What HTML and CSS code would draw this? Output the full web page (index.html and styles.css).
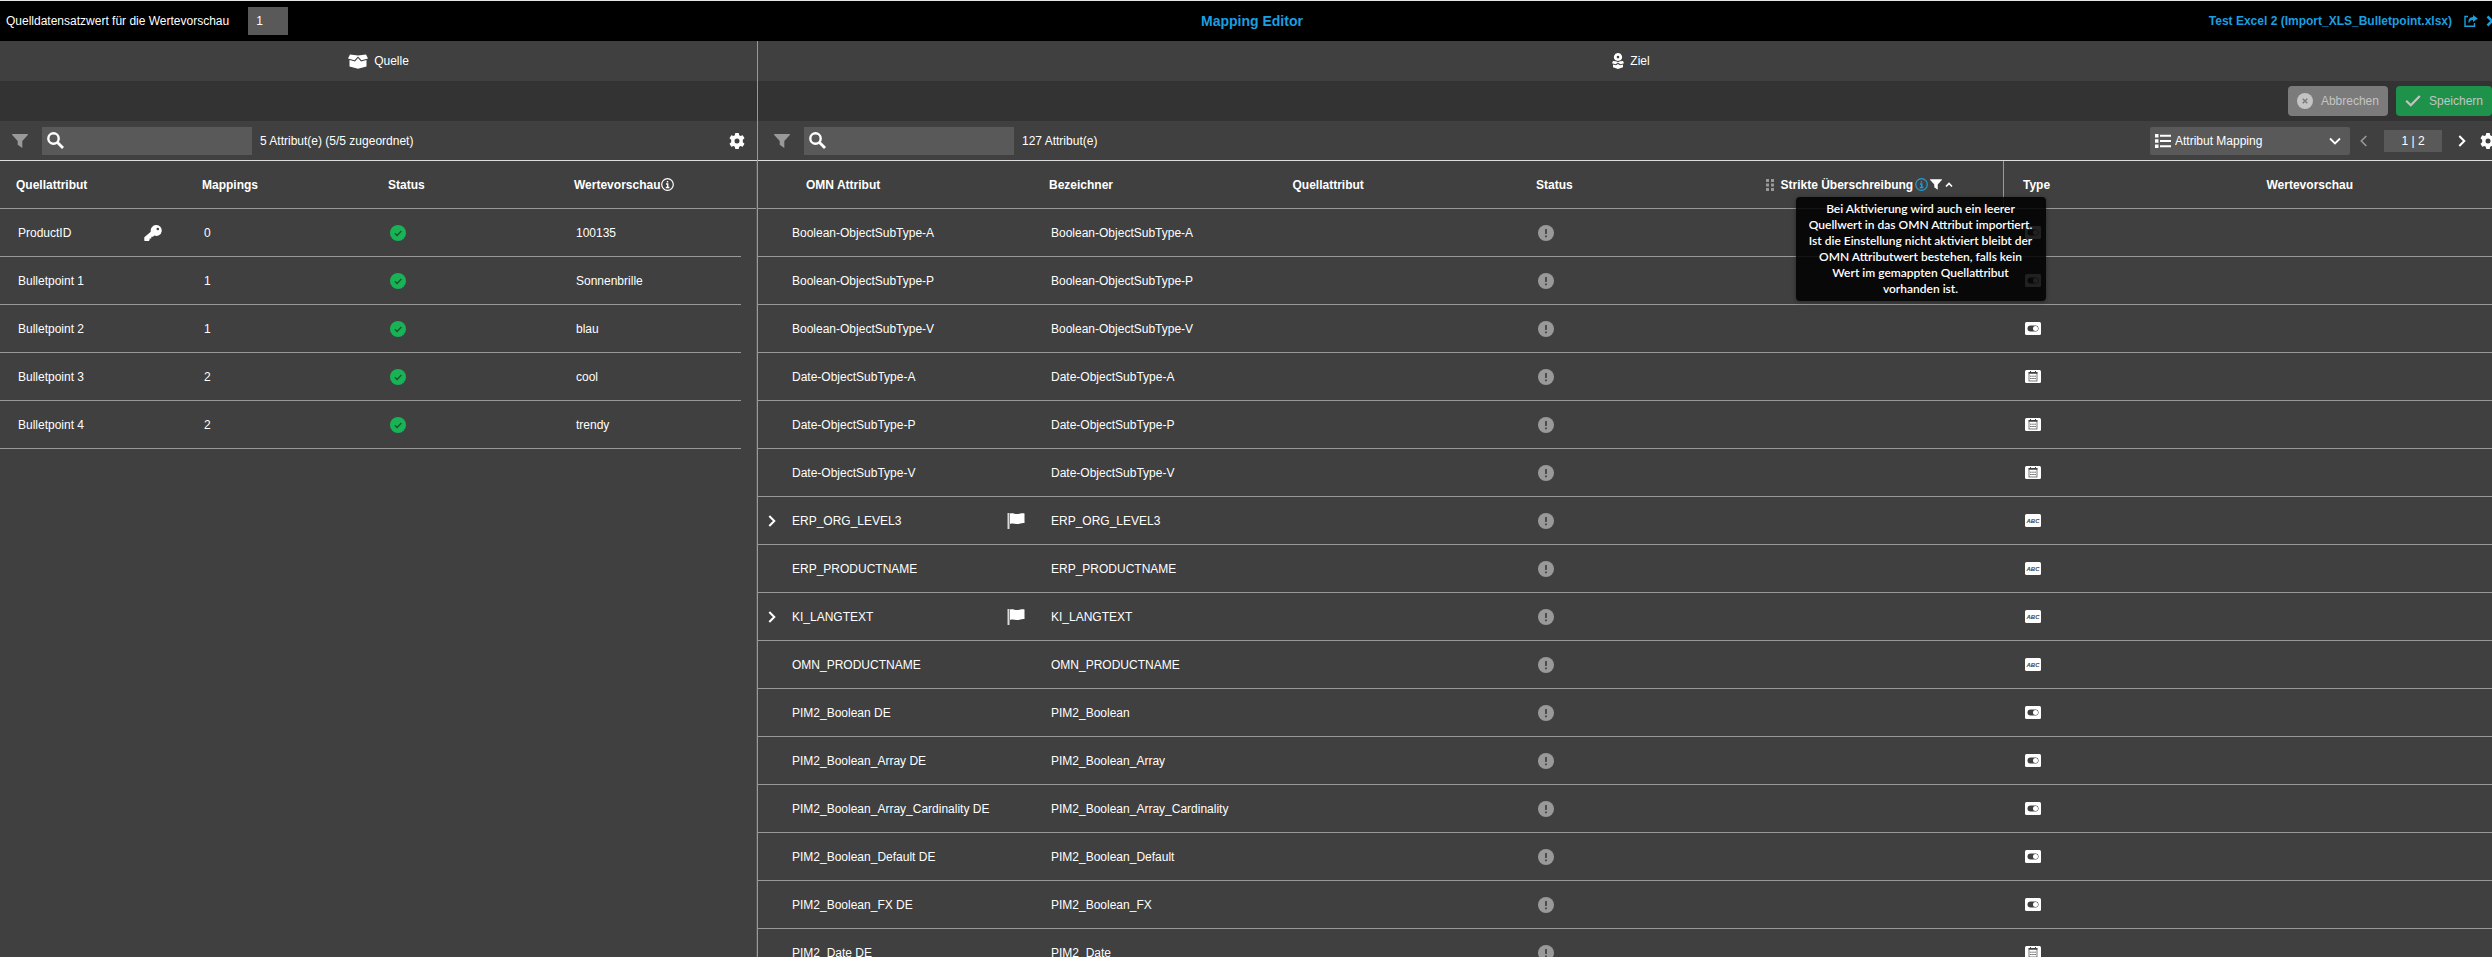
FILE: index.html
```html
<!DOCTYPE html>
<html lang="de">
<head>
    <meta charset="UTF-8">
    <meta name="viewport" content="width=device-width, initial-scale=1.0">
    <title>Mapping Editor</title>
    <link rel="stylesheet" href="styles.css">
</head>
<body>

<!-- Icon set -->
<svg class="icon-set" width="0" height="0" aria-hidden="true">
    <symbol id="i-filter" viewBox="0 0 16 14"><path d="M0.6 0h14.8c.6 0 .8.7.4 1.100L10.300 7v7L5.700 10.700V7L.2 1.100C-.2.7 0 0 .6 0z"/></symbol>
    <symbol id="i-search" viewBox="0 0 17 17"><circle cx="6.500" cy="6.500" r="5.200" fill="none" stroke="currentColor" stroke-width="2.400"/><path d="M10.500 10.500L16 16" stroke="currentColor" stroke-width="2.800"/></symbol>
    <symbol id="i-gear" viewBox="0 0 16 16"><path fill-rule="evenodd" d="M6.300 0h3.400l.5 2.300 1.300.7 2.200-.8L15.500 5.200 13.800 6.800v2.400l1.700 1.600-1.800 3-2.200-.8-1.300.7-.5 2.300H6.300l-.5-2.300-1.300-.7-2.200.8-1.800-3 1.700-1.600V6.800L.5 5.200l1.800-3 2.200.8 1.300-.7zM8 5.500a2.500 2.500 0 1 0 0 5 2.500 2.500 0 0 0 0-5z"/></symbol>
    <symbol id="i-box" viewBox="0 0 20 15"><path d="M2 .5l8 1 8-1 2 4-6.500 1.700L10 2.500 6.500 6.200 0 4.500z"/><path d="M1.500 6l5.500 1.500L10 4l3 3.500L18.500 6v6.500L10 14.800 1.500 12.500z"/></symbol>
    <symbol id="i-target" viewBox="0 0 12 16"><path fill-rule="evenodd" d="M6 0a4 4 0 0 1 2.500 7.200L6 8 3.500 7.200A4 4 0 0 1 6 0zm0 2.800a1.300 1.300 0 1 0 0 2.600 1.300 1.300 0 0 0 0-2.600z"/><path d="M1 8l3 .3 2 1 2-1L11 8l1 2.300-3.500 1L6 9.800l-2.500 1.500L0 10.300z"/><path d="M1 11.500l3 .8 2-1.300 2 1.300 3-.8v2.700L6 16l-5-1.800z"/></symbol>
    <symbol id="i-key" viewBox="0 0 18 16"><path fill-rule="evenodd" d="M12 0a5.500 5.500 0 1 1-1.800 10.600L9 11.700H7.300v1.700H5.600V15l-.8 1H.8L.3 15.500V12.300l6.500-5.600A5.500 5.500 0 0 1 12 0zm1.800 2.700a1.300 1.300 0 1 0 0 2.600 1.300 1.300 0 0 0 0-2.600z"/></symbol>
    <symbol id="i-ok" viewBox="0 0 16 16"><circle cx="8" cy="8" r="8" fill="#16b455"/><path d="M4.800 8.200l2.300 2.300 4.200-4.500" fill="none" stroke="#234a33" stroke-width="1.300"/></symbol>
    <symbol id="i-alert" viewBox="0 0 16 16"><circle cx="8" cy="8" r="8" fill="#999"/><path d="M8 4v5M8 10.500v1.800" stroke="#404040" stroke-width="1.700"/></symbol>
    <symbol id="i-info" viewBox="0 0 13 13"><circle cx="6.500" cy="6.500" r="5.800" fill="none" stroke="currentColor" stroke-width="1.200"/><path d="M6.500 3v1.500M5 6h1.700v3.500M4.800 9.500h3.600" fill="none" stroke="currentColor" stroke-width="1.400"/></symbol>
    <symbol id="i-flag" viewBox="0 0 18 16"><path d="M.5 0h2v16h-2z" opacity=".8"/><path d="M3 .6c3-1 5 .9 8 .4 2.500-.4 4-.9 6.500-.5V10c-3-.6-5 1.200-8 .9-2.500-.3-4-.9-6.500 0z"/></symbol>
    <symbol id="i-right" viewBox="0 0 8 12"><path d="M1.300 1l5 5-5 5" fill="none" stroke="currentColor" stroke-width="2"/></symbol>
    <symbol id="i-left" viewBox="0 0 8 12"><path d="M6.300 1l-5 5 5 5" fill="none" stroke="currentColor" stroke-width="1.600"/></symbol>
    <symbol id="i-down" viewBox="0 0 12 8"><path d="M1 1.500l5 5 5-5" fill="none" stroke="currentColor" stroke-width="1.800"/></symbol>
    <symbol id="i-up" viewBox="0 0 8 6"><path d="M1 4.500l3-3 3 3" fill="none" stroke="currentColor" stroke-width="1.700"/></symbol>
    <symbol id="i-list" viewBox="0 0 16 14"><path d="M0 0h3.500v3.500H0zM0 5.200h3.500v3.500H0zM0 10.500h3.500V14H0zM5 .8h11v2H5zM5 6h11v2H5zM5 11.300h11v2H5z"/></symbol>
    <symbol id="i-drag" viewBox="0 0 8 12"><path d="M0 0h3v3H0zM5 0h3v3H5zM0 4.500h3v3H0zM5 4.500h3v3H5zM0 9h3v3H0zM5 9h3v3H5z"/></symbol>
    <symbol id="i-share" viewBox="0 0 14 12"><path d="M4 1.500H1v9.700h9.500V8" fill="none" stroke="currentColor" stroke-width="1.400"/><path d="M9 0l4.800 3.500L9 7V5C6.500 5 5.500 6 5 8.500 3.500 5 5.500 2 9 2z"/></symbol>
    <symbol id="i-close" viewBox="0 0 12 12"><path d="M1.500 1.500l9 9M10.500 1.500l-9 9" stroke="currentColor" stroke-width="2.600"/></symbol>
    <symbol id="i-cancel" viewBox="0 0 16 16"><circle cx="8" cy="8" r="8"/><path d="M5.700 5.700l4.600 4.600M10.300 5.700l-4.600 4.600" stroke="#7b7b7b" stroke-width="1.500"/></symbol>
    <symbol id="i-check" viewBox="0 0 16 12"><path d="M1.200 5.800l4.600 4.500L14.800 1" fill="none" stroke="currentColor" stroke-width="2.200"/></symbol>
    <symbol id="t-bool" viewBox="0 0 16 13"><rect width="16" height="13" rx="1.500" fill="#fff"/><rect x="2.500" y="3.500" width="11" height="6" rx="3" fill="#404040"/><circle cx="10.500" cy="6.500" r="2.500" fill="#fff"/></symbol>
    <symbol id="t-date" viewBox="0 0 16 13"><rect width="16" height="13" rx="1.500" fill="#fff"/><rect x="4" y="2.500" width="8" height="8.500" fill="none" stroke="#404040" stroke-width=".7"/><path d="M3.700 2h8.600v1.800H3.700zM5 1h1v2H5zM10 1h1v2h-1z" fill="#404040"/><path d="M5.200 6.200h5.600M5.200 8.500h5.600" stroke="#404040" stroke-width=".9" stroke-dasharray="1.400 .7"/></symbol>
    <symbol id="t-text" viewBox="0 0 16 13"><rect width="16" height="13" rx="1.500" fill="#fff"/><text x="8" y="8.500" text-anchor="middle" font-size="6" font-style="italic" font-weight="bold" fill="#404040">ABC</text></symbol>
</svg>

<div class="app">
    <header class="topbar">
        <div class="preview-record">
            <label for="record">Quelldatensatzwert für die Wertevorschau</label>
            <input type="text" id="record" value="1">
        </div>
        <h1>Mapping Editor</h1>
        <div class="topbar-right">
            <a href="#">Test Excel 2 (Import_XLS_Bulletpoint.xlsx)</a>
            <button type="button" class="icon-btn share-btn" aria-label="Teilen"><svg><use href="#i-share"/></svg></button>
            <button type="button" class="icon-btn close-btn" aria-label="Schließen"><svg><use href="#i-close"/></svg></button>
        </div>
    </header>

    <main class="panels">
        <!-- Quelle -->
        <section class="panel source">
            <h2><svg class="box"><use href="#i-box"/></svg>Quelle</h2>
            <div class="actions"></div>
            <div class="toolbar">
                <button type="button" class="icon-btn filter-btn" aria-label="Filter"><svg><use href="#i-filter"/></svg></button>
                <div class="search">
                    <svg><use href="#i-search"/></svg>
                    <input type="text" aria-label="Quellattribute suchen">
                </div>
                <span class="count">5 Attribut(e) (5/5 zugeordnet)</span>
                <button type="button" class="icon-btn gear-btn" aria-label="Einstellungen"><svg><use href="#i-gear"/></svg></button>
            </div>
            <div class="table-wrap">
                <table>
                    <colgroup><col class="quarter"><col class="quarter"><col class="quarter"><col><col class="gutter"></colgroup>
                    <thead>
                        <tr><th>Quellattribut</th><th>Mappings</th><th>Status</th><th><div class="head-label">Wertevorschau<svg class="info"><use href="#i-info"/></svg></div></th><td></td></tr>
                    </thead>
                    <tbody>
                        <tr><td><div class="cell">ProductID<svg class="key"><use href="#i-key"/></svg></div></td><td>0</td><td><svg class="status"><use href="#i-ok"/></svg></td><td>100135</td></tr>
                        <tr><td>Bulletpoint 1</td><td>1</td><td><svg class="status"><use href="#i-ok"/></svg></td><td>Sonnenbrille</td></tr>
                        <tr><td>Bulletpoint 2</td><td>1</td><td><svg class="status"><use href="#i-ok"/></svg></td><td>blau</td></tr>
                        <tr><td>Bulletpoint 3</td><td>2</td><td><svg class="status"><use href="#i-ok"/></svg></td><td>cool</td></tr>
                        <tr><td>Bulletpoint 4</td><td>2</td><td><svg class="status"><use href="#i-ok"/></svg></td><td>trendy</td></tr>
                    </tbody>
                </table>
            </div>
        </section>

        <!-- Ziel -->
        <section class="panel target">
            <h2><svg class="pin"><use href="#i-target"/></svg>Ziel</h2>
            <div class="actions">
                <button type="button" class="btn cancel"><svg><use href="#i-cancel"/></svg>Abbrechen</button>
                <button type="button" class="btn save"><svg class="check"><use href="#i-check"/></svg>Speichern</button>
            </div>
            <div class="toolbar">
                <button type="button" class="icon-btn filter-btn" aria-label="Filter"><svg><use href="#i-filter"/></svg></button>
                <div class="search">
                    <svg><use href="#i-search"/></svg>
                    <input type="text" aria-label="OMN Attribute suchen">
                </div>
                <span class="count">127 Attribut(e)</span>
                <div class="view-select">
                    <svg class="list"><use href="#i-list"/></svg>
                    <select aria-label="Ansicht"><option>Attribut Mapping</option></select>
                    <svg class="down"><use href="#i-down"/></svg>
                </div>
                <button type="button" class="icon-btn prev-btn" aria-label="Vorherige Seite"><svg><use href="#i-left"/></svg></button>
                <span class="page">1 | 2</span>
                <button type="button" class="icon-btn next-btn" aria-label="Nächste Seite"><svg><use href="#i-right"/></svg></button>
                <button type="button" class="icon-btn gear-btn" aria-label="Einstellungen"><svg><use href="#i-gear"/></svg></button>
            </div>
            <div class="table-wrap">
                <table>
                    <colgroup><col class="name"><col><col><col><col><col><col><col class="edge"></colgroup>
                    <thead>
                        <tr>
                            <th>OMN Attribut</th><th>Bezeichner</th><th>Quellattribut</th><th>Status</th>
                            <th class="sorted">
                                <div class="head-label"><svg class="drag"><use href="#i-drag"/></svg>Strikte Überschreibung<svg class="info"><use href="#i-info"/></svg><svg class="funnel"><use href="#i-filter"/></svg><svg class="up"><use href="#i-up"/></svg></div>
                                <div class="tooltip" role="tooltip">Bei Aktivierung wird auch ein leerer Quellwert in das OMN Attribut importiert. Ist die Einstellung nicht aktiviert bleibt der OMN Attributwert bestehen, falls kein Wert im gemappten Quellattribut vorhanden ist.</div>
                            </th>
                            <th>Type</th><th>Wertevorschau</th><td></td>
                        </tr>
                    </thead>
                    <tbody>
                        <tr><td>Boolean-ObjectSubType-A</td><td>Boolean-ObjectSubType-A</td><td></td><td><svg class="status"><use href="#i-alert"/></svg></td><td></td><td><svg class="type"><use href="#t-bool"/></svg></td><td></td><td></td></tr>
                        <tr><td>Boolean-ObjectSubType-P</td><td>Boolean-ObjectSubType-P</td><td></td><td><svg class="status"><use href="#i-alert"/></svg></td><td></td><td><svg class="type"><use href="#t-bool"/></svg></td><td></td><td></td></tr>
                        <tr><td>Boolean-ObjectSubType-V</td><td>Boolean-ObjectSubType-V</td><td></td><td><svg class="status"><use href="#i-alert"/></svg></td><td></td><td><svg class="type"><use href="#t-bool"/></svg></td><td></td><td></td></tr>
                        <tr><td>Date-ObjectSubType-A</td><td>Date-ObjectSubType-A</td><td></td><td><svg class="status"><use href="#i-alert"/></svg></td><td></td><td><svg class="type"><use href="#t-date"/></svg></td><td></td><td></td></tr>
                        <tr><td>Date-ObjectSubType-P</td><td>Date-ObjectSubType-P</td><td></td><td><svg class="status"><use href="#i-alert"/></svg></td><td></td><td><svg class="type"><use href="#t-date"/></svg></td><td></td><td></td></tr>
                        <tr><td>Date-ObjectSubType-V</td><td>Date-ObjectSubType-V</td><td></td><td><svg class="status"><use href="#i-alert"/></svg></td><td></td><td><svg class="type"><use href="#t-date"/></svg></td><td></td><td></td></tr>
                        <tr><td class="expandable"><div class="cell"><button type="button" class="icon-btn expand-btn" aria-label="Aufklappen"><svg><use href="#i-right"/></svg></button>ERP_ORG_LEVEL3<svg class="flag"><use href="#i-flag"/></svg></div></td><td>ERP_ORG_LEVEL3</td><td></td><td><svg class="status"><use href="#i-alert"/></svg></td><td></td><td><svg class="type"><use href="#t-text"/></svg></td><td></td><td></td></tr>
                        <tr><td>ERP_PRODUCTNAME</td><td>ERP_PRODUCTNAME</td><td></td><td><svg class="status"><use href="#i-alert"/></svg></td><td></td><td><svg class="type"><use href="#t-text"/></svg></td><td></td><td></td></tr>
                        <tr><td class="expandable"><div class="cell"><button type="button" class="icon-btn expand-btn" aria-label="Aufklappen"><svg><use href="#i-right"/></svg></button>KI_LANGTEXT<svg class="flag"><use href="#i-flag"/></svg></div></td><td>KI_LANGTEXT</td><td></td><td><svg class="status"><use href="#i-alert"/></svg></td><td></td><td><svg class="type"><use href="#t-text"/></svg></td><td></td><td></td></tr>
                        <tr><td>OMN_PRODUCTNAME</td><td>OMN_PRODUCTNAME</td><td></td><td><svg class="status"><use href="#i-alert"/></svg></td><td></td><td><svg class="type"><use href="#t-text"/></svg></td><td></td><td></td></tr>
                        <tr><td>PIM2_Boolean DE</td><td>PIM2_Boolean</td><td></td><td><svg class="status"><use href="#i-alert"/></svg></td><td></td><td><svg class="type"><use href="#t-bool"/></svg></td><td></td><td></td></tr>
                        <tr><td>PIM2_Boolean_Array DE</td><td>PIM2_Boolean_Array</td><td></td><td><svg class="status"><use href="#i-alert"/></svg></td><td></td><td><svg class="type"><use href="#t-bool"/></svg></td><td></td><td></td></tr>
                        <tr><td>PIM2_Boolean_Array_Cardinality DE</td><td>PIM2_Boolean_Array_Cardinality</td><td></td><td><svg class="status"><use href="#i-alert"/></svg></td><td></td><td><svg class="type"><use href="#t-bool"/></svg></td><td></td><td></td></tr>
                        <tr><td>PIM2_Boolean_Default DE</td><td>PIM2_Boolean_Default</td><td></td><td><svg class="status"><use href="#i-alert"/></svg></td><td></td><td><svg class="type"><use href="#t-bool"/></svg></td><td></td><td></td></tr>
                        <tr><td>PIM2_Boolean_FX DE</td><td>PIM2_Boolean_FX</td><td></td><td><svg class="status"><use href="#i-alert"/></svg></td><td></td><td><svg class="type"><use href="#t-bool"/></svg></td><td></td><td></td></tr>
                        <tr><td>PIM2_Date DE</td><td>PIM2_Date</td><td></td><td><svg class="status"><use href="#i-alert"/></svg></td><td></td><td><svg class="type"><use href="#t-date"/></svg></td><td></td><td></td></tr>
                    </tbody>
                </table>
            </div>
        </section>
    </main>
</div>

</body>
</html>
```
FILE: styles.css
```css
* {
    box-sizing: border-box;
}

body {
    margin: 0;
    height: 100vh;
    overflow: hidden;
    background-color: #404040;
    color: #fff;
    font-family: "Liberation Sans", Arial, sans-serif;
    font-size: 12px;
}

svg {
    display: block;
    flex: none;
    fill: currentColor;
}

.icon-set {
    position: absolute;
}

input, select, button {
    font: inherit;
    color: inherit;
    border: none;
}

/* The editor is a little wider than the window and is cut at the right */
.app {
    width: calc(100% + 12px);
    height: 100vh;
    display: flex;
    flex-direction: column;
    border-top: 1px solid #e6e6e6;
}

/* Top bar */
.topbar {
    display: grid;
    grid-template-columns: 1fr auto 1fr;
    align-items: center;
    height: 40px;
    flex: none;
    padding: 0 6px;
    background-color: #000;
}

.preview-record {
    display: flex;
    align-items: center;
    gap: 19px;
}

.preview-record input {
    width: 40px;
    height: 28px;
    padding: 0 8px;
    background-color: #595959;
}

h1 {
    margin: 0;
    font-size: 14px;
    color: #1a9fe0;
}

.topbar-right {
    display: flex;
    align-items: center;
    justify-content: flex-end;
    font-weight: bold;
    color: #1a9fe0;
}

.topbar-right a {
    color: inherit;
    text-decoration: none;
}

.icon-btn {
    padding: 0;
    background: none;
    cursor: pointer;
}

.share-btn {
    margin: 0 8px 0 12px;
}

.share-btn svg {
    width: 14px;
    height: 12px;
}

.close-btn svg {
    width: 12px;
    height: 12px;
}

/* Panels */
.panels {
    display: grid;
    grid-template-columns: 758fr 1746fr;
    flex: 1;
    min-height: 0;
}

.panel {
    display: flex;
    flex-direction: column;
    min-width: 0;
    min-height: 0;
}

.source {
    border-right: 1px solid #999;
}

h2 {
    display: flex;
    align-items: center;
    justify-content: center;
    gap: 6px;
    height: 40px;
    flex: none;
    margin: 0;
    font-size: 12px;
    font-weight: normal;
}

.box {
    width: 20px;
    height: 15px;
}

.pin {
    width: 12px;
    height: 16px;
}

.actions {
    display: flex;
    align-items: center;
    justify-content: flex-end;
    gap: 8px;
    height: 40px;
    flex: none;
    padding-right: 12px;
    background-color: #333;
}

.btn {
    display: flex;
    align-items: center;
    gap: 8px;
    height: 30px;
    padding: 0 9px;
    border-radius: 4px;
    color: #c4c4c4;
}

.btn svg {
    width: 16px;
    height: 16px;
}

.btn .check {
    height: 12px;
}

.cancel {
    background-color: #7b7b7b;
}

.save {
    background-color: #1e924b;
}

.toolbar {
    display: flex;
    align-items: center;
    height: 40px;
    flex: none;
    padding: 0 12px;
    border-bottom: 1px solid #ddd;
}

.target .toolbar {
    padding: 0 8px 0 16px;
}

.filter-btn {
    margin-right: 14px;
    color: #999;
}

.filter-btn svg {
    width: 16px;
    height: 14px;
}

.search {
    position: relative;
}

.search svg {
    position: absolute;
    left: 5px;
    top: 5px;
    width: 17px;
    height: 17px;
}

.search input {
    display: block;
    width: 210px;
    height: 28px;
    padding: 0 8px 0 28px;
    background-color: #595959;
}

.count {
    margin: 0 auto 0 8px;
}

.gear-btn svg {
    width: 16px;
    height: 16px;
}

.view-select {
    position: relative;
}

.view-select select {
    display: block;
    appearance: none;
    width: 200px;
    height: 28px;
    padding: 0 25px;
    border-radius: 2px;
    background-color: #595959;
}

.list {
    position: absolute;
    left: 5px;
    top: 7px;
    width: 16px;
    height: 14px;
}

.down {
    position: absolute;
    right: 9px;
    top: 10px;
    width: 12px;
    height: 8px;
}

.prev-btn {
    margin: 0 16px 0 10px;
    color: #999;
}

.next-btn {
    margin: 0 14px 0 16px;
}

.prev-btn svg, .next-btn svg {
    width: 8px;
    height: 12px;
}

.page {
    width: 58px;
    line-height: 22px;
    text-align: center;
    background-color: #595959;
}

/* Tables */
.table-wrap {
    flex: 1;
    min-height: 0;
    overflow: hidden;
}

.source .table-wrap {
    border-right: 1px solid #555;
}

table {
    width: 100%;
    table-layout: fixed;
    border-collapse: separate;
    border-spacing: 0;
}

th, td {
    height: 48px;
    padding: 0 0 0 18px;
    border-bottom: 1px solid #999;
    text-align: left;
    white-space: nowrap;
}

th {
    padding-left: 16px;
}

.quarter {
    width: 186px;
}

.gutter {
    width: 15px;
}

.name {
    width: 275px;
}

.edge {
    width: 10px;
}

.target th:first-child {
    padding-left: 48px;
}

.target td:first-child {
    padding-left: 34px;
}

.target td.expandable {
    padding-left: 10px;
}

.cell, .head-label {
    display: flex;
    align-items: center;
}

.expand-btn {
    margin-right: 16px;
}

.expand-btn svg {
    width: 8px;
    height: 12px;
}

.key {
    width: 18px;
    height: 16px;
    margin: 0 24px 0 auto;
}

.flag {
    width: 18px;
    height: 16px;
    margin: 0 8px 0 auto;
}

.status {
    width: 16px;
    height: 16px;
}

.type {
    width: 16px;
    height: 13px;
}

.info {
    width: 13px;
    height: 13px;
    margin-left: 1px;
}

.sorted {
    position: relative;
    padding-left: 2px;
}

/* Resize handle of the column */
.sorted::after {
    content: "";
    position: absolute;
    top: 0;
    right: 3px;
    width: 1px;
    height: 48px;
    background-color: #999;
}

.sorted .info {
    margin: 0 2px;
    color: #1a9fe0;
}

.drag {
    width: 8px;
    height: 12px;
    margin-right: 7px;
    color: #999;
}

.funnel {
    width: 12px;
    height: 11px;
}

.up {
    width: 8px;
    height: 6px;
    margin-left: 3px;
}

.tooltip {
    position: absolute;
    z-index: 1;
    top: 36px;
    left: 32px;
    width: 250px;
    padding: 4px 10px;
    border-radius: 4px;
    background-color: rgba(0, 0, 0, 0.87);
    box-shadow: 0 1px 4px rgba(0, 0, 0, 0.4);
    font-family: Lato, sans-serif;
    font-size: 12px;
    font-weight: 600;
    line-height: 16px;
    text-align: center;
    white-space: normal;
}
```
